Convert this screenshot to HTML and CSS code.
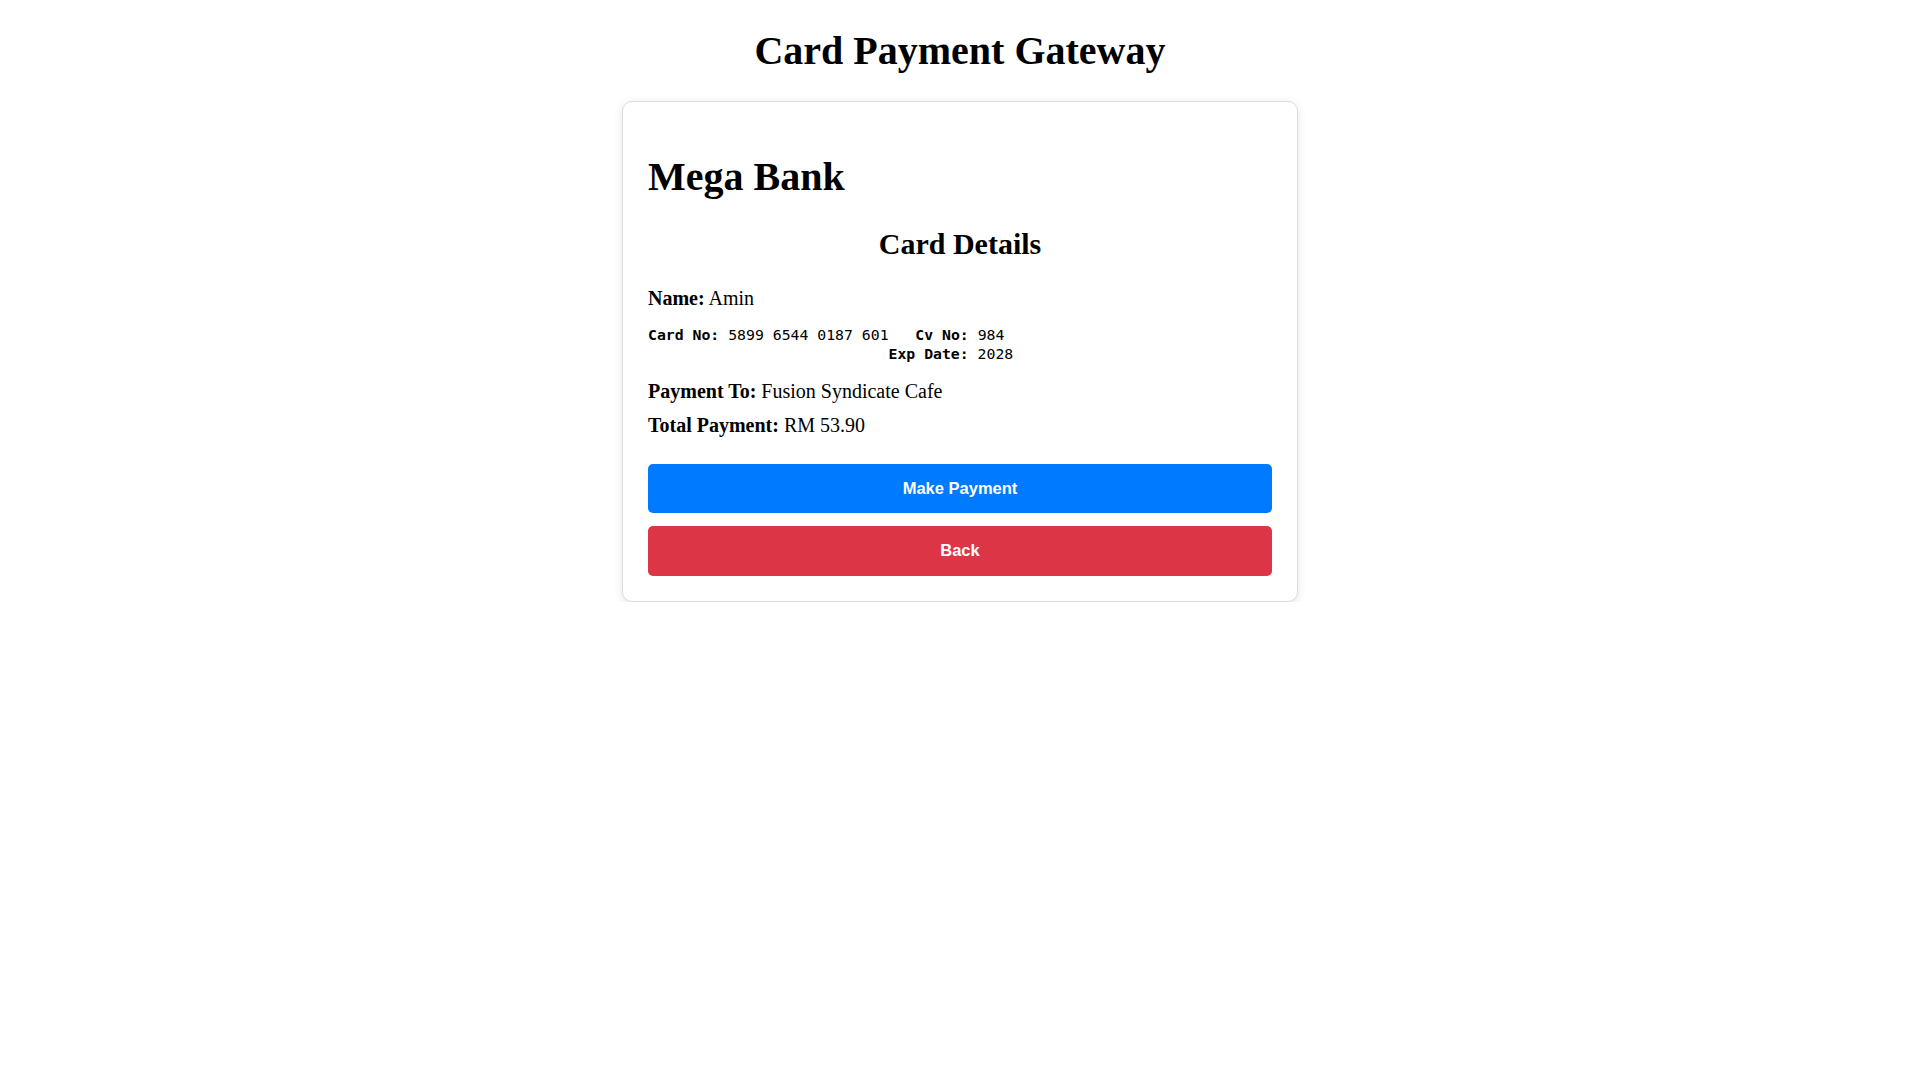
FILE: index.html
```html
<!DOCTYPE html>
<html lang="en">
<head>
<meta charset="utf-8">
<title>Card Payment Gateway</title>
<link rel="stylesheet" href="styles.css">
</head>
<body>
<h1 class="page-title">Card Payment Gateway</h1>
<div class="card">
  <h1 class="bank">Mega Bank</h1>
  <h2 class="section">Card Details</h2>
  <p class="row first"><strong>Name:</strong> Amin</p>
  <div class="mono">
    <div class="mono-line"><b>Card No:</b> 5899 6544 0187 601<span class="sep"></span><b>Cv No:</b> 984</div>
    <div class="mono-line indent"><b>Exp Date:</b> 2028</div>
  </div>
  <p class="row pay-to"><strong>Payment To:</strong> Fusion Syndicate Cafe</p>
  <p class="row total"><strong>Total Payment:</strong> RM 53.90</p>
  <div class="actions">
    <button class="btn btn-primary" type="button">Make Payment</button>
    <button class="btn btn-danger" type="button">Back</button>
  </div>
</div>
</body>
</html>
```
FILE: styles.css
```css
html, body {
  margin: 0;
  padding: 0;
  background: #ffffff;
}
body {
  font-family: "Liberation Serif", "Times New Roman", serif;
  font-size: 20px;
  color: #000;
  padding-top: 1px;
}
.page-title {
  font-size: 40px;
  line-height: 46px;
  font-weight: bold;
  text-align: center;
  margin: 27px 0 27px;
}
.card {
  width: 624px;
  margin: 0 auto;
  padding: 25px;
  border: 1px solid #dddddd;
  border-radius: 10px;
  box-shadow: 0 2px 10px rgba(0, 0, 0, 0.1);
  background: #fff;
}
.bank {
  font-size: 40px;
  line-height: 46px;
  margin: 27px 0 0;
}
.section {
  font-size: 30px;
  line-height: 34.5px;
  text-align: center;
  margin: 27px 0 0;
}
.row {
  font-size: 20px;
  line-height: 23px;
  margin: 10px 0 0;
}
.row.first {
  margin-top: 25px;
}
.row.pay-to {
  margin-top: 17px;
}
.row.total {
  margin-top: 11px;
}
.mono {
  font-family: "DejaVu Sans Mono", "Liberation Mono", monospace;
  font-size: 14.8px;
  line-height: 19px;
  margin: 15px 0 0;
}
.mono-line {
  white-space: pre;
}
.mono-line .sep {
  display: inline-block;
  width: 3ch;
}
.mono-line.indent {
  padding-left: 27ch;
}
.actions {
  display: flex;
  flex-direction: column;
  gap: 13px;
  margin-top: 27px;
}
.btn {
  display: block;
  width: 100%;
  border: none;
  border-radius: 5px;
  padding: 15px;
  font-family: "Liberation Sans", Arial, sans-serif;
  font-size: 16.5px;
  line-height: 19.5px;
  font-weight: bold;
  color: #fff;
  cursor: pointer;
}
.btn-primary {
  background: #007bff;
}
.btn-danger {
  background: #dc3545;
}
```
